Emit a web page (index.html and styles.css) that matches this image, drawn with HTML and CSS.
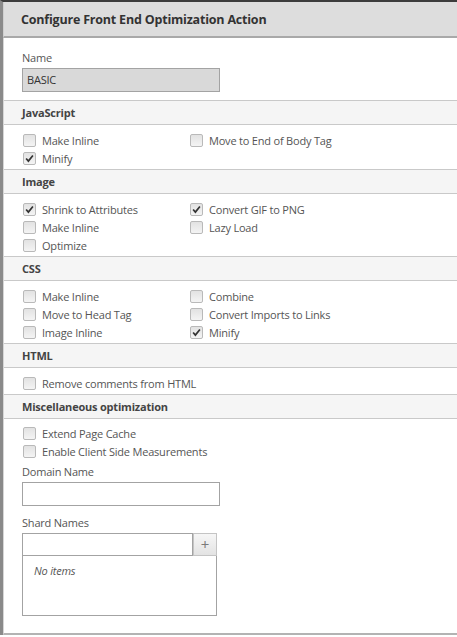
FILE: index.html
```html
<!DOCTYPE html>
<html>
<head>
<meta charset="utf-8">
<link rel="stylesheet" href="styles.css">
</head>
<body>
<div class="frame">
  <div class="title">Configure Front End Optimization Action</div>
  <div class="panel">
    <div class="block name-block">
      <label class="field-label">Name</label>
      <div class="input readonly">BASIC</div>
    </div>

    <div class="section-head">JavaScript</div>
    <div class="block grid">
      <div class="cb"><span class="box"></span>Make Inline</div>
      <div class="cb"><span class="box"></span>Move to End of Body Tag</div>
      <div class="cb"><span class="box checked"><svg viewBox="0 0 13 13"><path d="M2.5 6.5 L5.2 9.6 L10.5 3" /></svg></span>Minify</div>
    </div>

    <div class="section-head">Image</div>
    <div class="block grid">
      <div class="cb"><span class="box checked"><svg viewBox="0 0 13 13"><path d="M2.5 6.5 L5.2 9.6 L10.5 3" /></svg></span>Shrink to Attributes</div>
      <div class="cb"><span class="box checked"><svg viewBox="0 0 13 13"><path d="M2.5 6.5 L5.2 9.6 L10.5 3" /></svg></span>Convert GIF to PNG</div>
      <div class="cb"><span class="box"></span>Make Inline</div>
      <div class="cb"><span class="box"></span>Lazy Load</div>
      <div class="cb"><span class="box"></span>Optimize</div>
    </div>

    <div class="section-head">CSS</div>
    <div class="block grid">
      <div class="cb"><span class="box"></span>Make Inline</div>
      <div class="cb"><span class="box"></span>Combine</div>
      <div class="cb"><span class="box"></span>Move to Head Tag</div>
      <div class="cb"><span class="box"></span>Convert Imports to Links</div>
      <div class="cb"><span class="box"></span>Image Inline</div>
      <div class="cb"><span class="box checked"><svg viewBox="0 0 13 13"><path d="M2.5 6.5 L5.2 9.6 L10.5 3" /></svg></span>Minify</div>
    </div>

    <div class="section-head">HTML</div>
    <div class="block grid">
      <div class="cb wide"><span class="box"></span>Remove comments from HTML</div>
    </div>

    <div class="section-head">Miscellaneous optimization</div>
    <div class="block misc">
      <div class="cb"><span class="box"></span>Extend Page Cache</div>
      <div class="cb"><span class="box"></span>Enable Client Side Measurements</div>
      <label class="field-label domain-label">Domain Name</label>
      <div class="input domain-input"></div>
      <label class="field-label shard-label">Shard Names</label>
      <div class="shard">
        <div class="shard-row">
          <div class="input shard-input"></div>
          <div class="add-btn">+</div>
        </div>
        <div class="list"><span class="empty">No items</span></div>
      </div>
    </div>
  </div>
</div>
</body>
</html>
```

FILE: styles.css
```css
html, body {
  margin: 0;
  padding: 0;
  background: #ffffff;
}
body {
  font-family: "Open Sans", "Noto Sans", sans-serif;
  font-size: 11px;
  letter-spacing: -0.2px;
  color: #555555;
}
.frame {
  border-top: 2px solid #3c3c3c;
  border-left: 3px solid #8a8a8a;
  height: 635px;
  box-sizing: border-box;
  display: flex;
  flex-direction: column;
}
.title {
  height: 36px;
  box-sizing: border-box;
  background: #dddddd;
  border-left: 1px solid #cfcfcf;
  border-bottom: 2px solid #a9a9a9;
  padding-left: 17px;
  padding-top: 1px;
  display: flex;
  align-items: center;
  font-weight: bold;
  font-size: 12.5px;
  letter-spacing: -0.2px;
  color: #333333;
}
.panel {
  flex: 1;
  border-left: 1px solid #d6d6d6;
  border-bottom: 2px solid #b3b3b3;
}
.block {
  padding-left: 18px;
}
.name-block {
  padding-top: 12px;
  padding-bottom: 8px;
}
.field-label {
  display: block;
  line-height: 16px;
  color: #555555;
}
.input {
  width: 198px;
  height: 24px;
  box-sizing: border-box;
  border: 1px solid #a3a3a3;
  background: #ffffff;
  margin-top: 2px;
  padding-left: 4px;
  line-height: 22px;
  color: #333333;
}
.input.readonly {
  background: #d9d9d9;
}
.section-head {
  height: 25px;
  box-sizing: border-box;
  border-top: 1px solid #c9c9c9;
  border-bottom: 1px solid #c9c9c9;
  background: #f5f5f5;
  padding-left: 18px;
  display: flex;
  align-items: center;
  font-weight: bold;
  color: #444444;
}
.grid {
  display: grid;
  grid-template-columns: 167px auto;
  padding-top: 6px;
  padding-bottom: 2px;
}
.cb {
  height: 18px;
  display: flex;
  align-items: center;
  padding-left: 1px;
  white-space: nowrap;
  color: #555555;
}
.cb.wide {
  grid-column: 1 / span 2;
}
.box {
  width: 13px;
  height: 13px;
  box-sizing: border-box;
  border: 1px solid #b9b9b9;
  border-radius: 2px;
  background: linear-gradient(#e2e2e2, #f4f4f4);
  margin-right: 6px;
  flex: none;
  display: flex;
}
.box svg {
  width: 11px;
  height: 11px;
}
.box path {
  fill: none;
  stroke: #333333;
  stroke-width: 2;
}
.misc {
  padding-top: 5px;
}
.domain-label {
  margin-top: 4px;
}
.domain-input {
  margin-top: 2px;
}
.shard-label {
  margin-top: 9px;
}
.shard {
  width: 195px;
  margin-top: 2px;
}
.shard-row {
  display: flex;
}
.shard-input {
  width: 171px;
  height: 23px;
  margin-top: 0;
}
.add-btn {
  width: 24px;
  height: 23px;
  box-sizing: border-box;
  border: 1px solid #c4c4c4;
  background: linear-gradient(#f6f6f6, #e3e3e3);
  color: #7a7a7a;
  font-size: 15px;
  line-height: 20px;
  text-align: center;
}
.list {
  height: 60px;
  box-sizing: border-box;
  border: 1px solid #a3a3a3;
  border-top: none;
  padding: 7px 0 0 11px;
}
.empty {
  font-style: italic;
  color: #555555;
}
```
